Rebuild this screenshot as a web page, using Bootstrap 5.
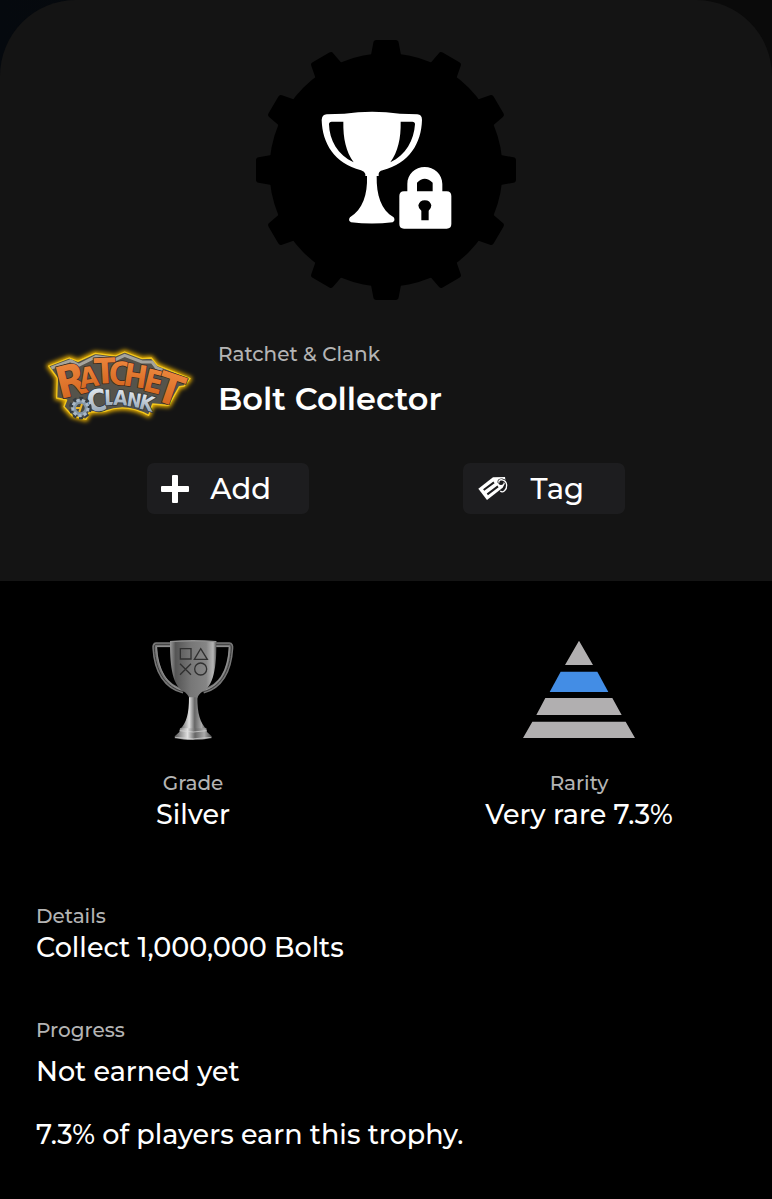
<!DOCTYPE html>
<html lang="en">
<head>
<meta charset="utf-8">
<meta name="viewport" content="width=device-width, initial-scale=1">
<title>Bolt Collector</title>
<link href="https://cdn.jsdelivr.net/npm/bootstrap@5.3.0/dist/css/bootstrap.min.css" rel="stylesheet">
<style>
body { background: #000; color: #fff; font-family: Montserrat, Inter, sans-serif; font-weight: 500; }
.backdrop { background: linear-gradient(90deg, #05090e, #0a0a0a 60%); }
.sheet-head { background: #141414; border-radius: 76px 76px 0 0; padding: 40px 0 67px; }
.title-row { gap: 18px; padding: 36px 36px 0; }
.caption { color: #b4b4b4; font-size: 20px; line-height: 28px; }
.fact { font-size: 27px; line-height: 36px; font-weight: 500; }
.trophy-name { font-size: 32px; line-height: 40px; font-weight: 600; margin-top: 11px; }
.actions { padding: 31px 19% 0; }
.btn-action { --bs-btn-color: #fff; --bs-btn-bg: #1d1d1f; --bs-btn-hover-color: #fff; --bs-btn-hover-bg: #2a2a2d; --bs-btn-border-width: 0; --bs-btn-border-radius: 7px;
  width: 162px; height: 51px; padding: 0 19px 0 12px; font-size: 29px; line-height: 51px; font-weight: 500; }
.btn-action span { flex: 1; }
.stats { padding: 59px 0 69px; }
.stats .caption { margin-top: 27px; }
.facts { padding: 0 36px 46px; }
.progress-title { margin-top: 50px; }
.progress-facts { margin-top: 10px; gap: 27px; }
</style>
</head>
<body>
<div class="backdrop">
<header class="sheet-head">
  <svg class="d-block mx-auto" width="260" height="260" viewBox="30 30 780 780" role="img" aria-label="Locked trophy">
    <defs><path id="tooth" d="M374 80L382 38Q383 30 391 30H449Q457 30 458 38L466 80Z"/></defs>
    <g fill="#000">
      <circle cx="420" cy="420" r="350"/>
      <use href="#tooth"/><use href="#tooth" transform="rotate(30 420 420)"/><use href="#tooth" transform="rotate(60 420 420)"/>
      <use href="#tooth" transform="rotate(90 420 420)"/><use href="#tooth" transform="rotate(120 420 420)"/><use href="#tooth" transform="rotate(150 420 420)"/>
      <use href="#tooth" transform="rotate(180 420 420)"/><use href="#tooth" transform="rotate(210 420 420)"/><use href="#tooth" transform="rotate(240 420 420)"/>
      <use href="#tooth" transform="rotate(270 420 420)"/><use href="#tooth" transform="rotate(300 420 420)"/><use href="#tooth" transform="rotate(330 420 420)"/>
    </g>
    <path fill="#fff" fill-rule="evenodd" d="M295 251Q378 240 462 251L514 253Q528 254 528 270C526 340 490 400 410 421Q398 424 398 432V438H392C391 495 405 540 443 562Q449 572 440 577Q378 584 315 577Q305 572 312 562C350 538 365 495 363 438H358V432Q356 425 345 421C265 400 229 340 227 270Q228 254 242 253ZM249 283Q249 275 257 275H292C291 325 300 365 323 397C275 375 250 330 249 283ZM464 275H499Q507 275 507 283C504 330 480 375 433 397C456 365 465 325 464 275Z"/>
    <path fill="#fff" fill-rule="evenodd" d="M484 484V462C484 432 508 411 536 411S589 432 589 462V484H602Q616 484 616 498V582Q616 596 602 596H474Q460 596 460 582V498Q460 484 474 484ZM513 484H560V458Q536 435 513 458ZM526 571V542Q517 536 517 526A20 20 0 0 1 556 526Q556 536 548 542V571Z"/>
  </svg>

  <div class="title-row d-flex align-items-start">
    <svg class="flex-shrink-0" width="164" height="96" viewBox="0 0 492 288" role="img" aria-label="Ratchet and Clank">
      <defs>
        <filter id="glow" x="-20%" y="-20%" width="140%" height="140%"><feGaussianBlur stdDeviation="7"/></filter>
        <linearGradient id="orange" x2="0" y2="1"><stop stop-color="#f08c42"/><stop offset="1" stop-color="#d0601a"/></linearGradient>
        <linearGradient id="steel" x2="0" y2="1"><stop stop-color="#f0f4f8"/><stop offset="1" stop-color="#8799ab"/></linearGradient>
        <path id="plate" d="M38 90L100 66L126 76L178 52L238 60L266 48L318 68L346 66L364 88L462 128L444 150L430 152L398 208L350 204L338 238Q270 200 206 226L160 228L150 250L110 240L84 212L92 192L62 186L64 126Z"/>
      </defs>
      <use href="#plate" fill="#f5b800" stroke="#f5b800" stroke-width="13" stroke-linejoin="round" filter="url(#glow)"/>
      <use href="#plate" fill="#55534b" stroke="#f3c71c" stroke-width="4" stroke-linejoin="round"/>
      <path d="M46 96L104 74L128 88L180 62L240 70L266 58L318 78L348 78L362 96L450 130" fill="none" stroke="#a5a49c" stroke-width="9"/>
      <g font-family="'DejaVu Sans Condensed', 'DejaVu Sans', sans-serif" font-weight="700" fill="url(#orange)" stroke="#33281d" stroke-width="4" paint-order="stroke" stroke-linejoin="round">
        <text transform="translate(72 190) rotate(-14)" font-size="132">R</text>
        <text transform="translate(134 157) rotate(-9)" font-size="84">A</text>
        <text transform="translate(176 144) rotate(-3)" font-size="106">T</text>
        <text transform="translate(216 144) rotate(4)" font-size="96">C</text>
        <text transform="translate(259 147) rotate(9)" font-size="94">H</text>
        <text transform="translate(317 162) rotate(14)" font-size="94">E</text>
        <text transform="translate(351 190) rotate(19)" font-size="128">T</text>
      </g>
      <g font-family="'DejaVu Sans Condensed', 'DejaVu Sans', sans-serif" font-weight="700" fill="url(#steel)" stroke="#33383e" stroke-width="5" paint-order="stroke" stroke-linejoin="round">
        <text transform="translate(158 230) rotate(-10)" font-size="90">C</text>
        <text transform="translate(205 208) rotate(-2)" font-size="64">L</text>
        <text transform="translate(231 206) rotate(3)" font-size="62">A</text>
        <text transform="translate(270 209) rotate(9)" font-size="58">N</text>
        <text transform="translate(306 217) rotate(15)" font-size="62">K</text>
      </g>
      <circle cx="133" cy="216" r="26" fill="none" stroke="#333b42" stroke-width="16" stroke-dasharray="10 7"/>
      <circle cx="133" cy="216" r="23" fill="#8496a6" stroke="#a9b8c6" stroke-width="9" stroke-dasharray="10 6"/>
      <circle cx="133" cy="216" r="13" fill="#494a42"/><path d="M120 216H134M138 204L130 228" stroke="#e9b52a" stroke-width="6"/>
    </svg>
    <div class="pt-1">
      <div class="caption">Ratchet &amp; Clank</div>
      <h1 class="trophy-name mb-0">Bolt Collector</h1>
    </div>
  </div>

  <div class="actions d-flex justify-content-between">
    <button type="button" class="btn btn-action d-flex align-items-center">
      <svg width="33" height="33" viewBox="0 0 33 33" aria-hidden="true"><rect x="2" y="14" width="28" height="6" rx="1" fill="#fff"/><rect x="13" y="3" width="6" height="28" rx="1" fill="#fff"/></svg>
      <span>Add</span>
    </button>
    <button type="button" class="btn btn-action d-flex align-items-center">
      <svg width="33" height="33" viewBox="56 51 99 99" aria-hidden="true">
        <path fill="#fff" d="M66 101L110 67L146 66L148 81L139 98L92 135Z"/>
        <path d="M82 105L113 82M93 118L125 94" stroke="#1d1d1f" stroke-width="6"/>
        <circle cx="134" cy="82" r="8" fill="#1d1d1f"/>
        <path d="M128 83C124 70 149 71 151 90C152 105 139 115 132 108" fill="none" stroke="#1d1d1f" stroke-width="8"/>
        <path d="M128 83C124 70 149 71 151 90C152 105 139 115 132 108" fill="none" stroke="#fff" stroke-width="4"/>
      </svg>
      <span>Tag</span>
    </button>
  </div>
</header>
</div>

<main>
  <section class="stats row g-0 text-center">
    <div class="col-6">
      <svg width="110" height="102" class="d-block mx-auto" viewBox="-6 30 330 306" role="img" aria-label="Silver trophy">
        <defs>
          <linearGradient id="bowl"><stop stop-color="#999"/><stop offset=".12" stop-color="#555"/><stop offset=".45" stop-color="#777"/><stop offset=".78" stop-color="#858585"/><stop offset=".93" stop-color="#b5b5b5"/><stop offset="1" stop-color="#555"/></linearGradient>
          <linearGradient id="stem"><stop stop-color="#555"/><stop offset=".35" stop-color="#e0e0e0"/><stop offset=".55" stop-color="#666"/><stop offset=".8" stop-color="#aaa"/><stop offset="1" stop-color="#444"/></linearGradient>
        </defs>
        <g fill="none" stroke-linejoin="round">
          <path d="M98 44H48Q43 44 44 54C48 125 78 171 130 184M222 44H268Q274 44 273 54C269 125 240 171 190 184" stroke="#777" stroke-width="14"/>
          <path d="M98 43H48Q42 44 43 54C47 125 77 172 130 185M222 43H269Q275 44 274 54C270 125 241 172 190 185" stroke="#3c3c3c" stroke-width="3"/>
          <path d="M94 50H50C53 118 80 164 124 180M228 50H268C266 118 240 164 196 180" stroke="#a2a2a2" stroke-width="2"/>
        </g>
        <path fill="url(#bowl)" d="M90 33H229C230 90 226 164 190 184Q176 191 172 205H148Q143 191 130 184C93 164 90 90 90 33Z"/>
        <path fill="#8f8f8f" d="M90 33Q159 27 229 33V37Q159 32 90 37Z"/>
        <path fill="url(#stem)" d="M147 202H172C172 250 180 281 201 298H119C140 281 147 250 147 202Z"/>
        <path fill="url(#stem)" d="M120 295H199L201 306L215 319V325Q159 335 104 325V319L118 306Z"/>
        <path d="M119 302Q160 310 200 302M105 322Q160 331 214 322" fill="none" stroke="#ddd" stroke-width="2"/>
        <g fill="none" stroke="#303030" stroke-width="4"><path d="M121 56H153V87H121ZM182 56L202 88H163ZM120 101L153 134M153 101L120 134"/><circle cx="182" cy="117" r="18"/></g>
      </svg>
      <div class="caption">Grade</div>
      <div class="fact">Silver</div>
    </div>
    <div class="col-6">
      <svg width="110" height="102" class="d-block mx-auto overflow-visible" viewBox="42 30 330 306" role="img" aria-label="Second highest rarity tier">
        <path fill="#b1afb0" d="M207 32L249 105H165ZM106 204H307L335 255H79ZM67 275H347L375 324H39Z"/>
        <path fill="#438de5" d="M152 125H262L295 186H119Z"/>
      </svg>
      <div class="caption">Rarity</div>
      <div class="fact">Very rare 7.3%</div>
    </div>
  </section>
  <section class="facts">
    <div class="caption">Details</div>
    <div class="fact">Collect 1,000,000 Bolts</div>
    <div class="caption progress-title">Progress</div>
    <div class="progress-facts d-flex flex-column">
      <div class="fact">Not earned yet</div>
      <div class="fact">7.3% of players earn this trophy.</div>
    </div>
  </section>
</main>
<script src="https://cdn.jsdelivr.net/npm/bootstrap@5.3.0/dist/js/bootstrap.bundle.min.js"></script>
</body>
</html>
